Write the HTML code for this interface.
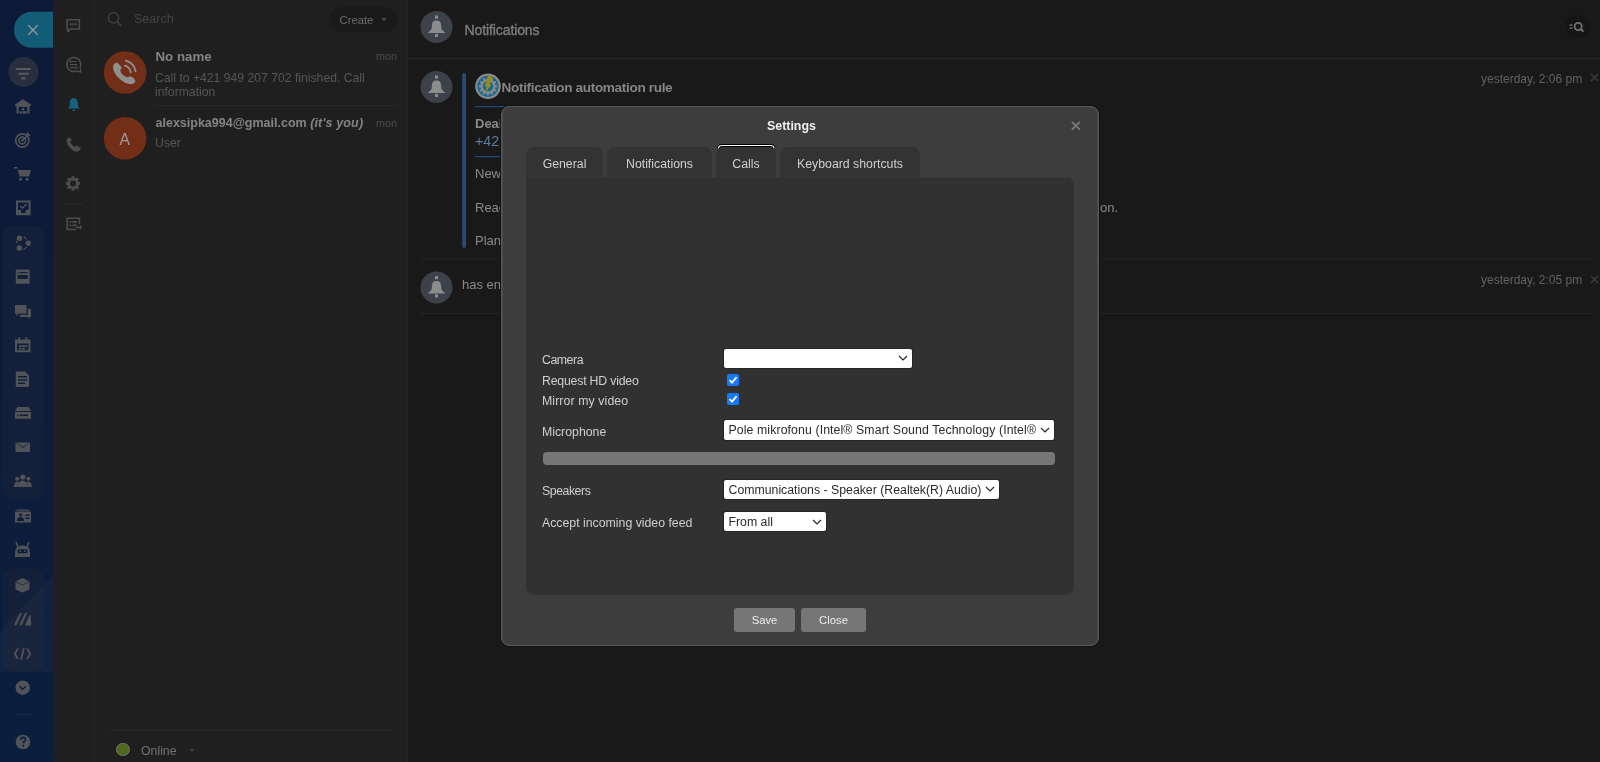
<!DOCTYPE html>
<html><head><meta charset="utf-8">
<style>
*{margin:0;padding:0;box-sizing:border-box}
html,body{width:1600px;height:762px;overflow:hidden;background:#1b1b1b;font-family:"Liberation Sans",sans-serif}
.abs{position:absolute}
.t{position:absolute;white-space:nowrap;line-height:1}
#c1{left:0;top:0;width:53px;height:762px;background:linear-gradient(180deg,#0d1a37 0%,#0e1c39 50%,#0b1e3e 100%);overflow:hidden}
#c2{left:53px;top:0;width:42px;height:762px;background:#1f1f1f}
#c3{left:95px;top:0;width:312px;height:762px;background:#1f1f1f}
#c3::before{content:"";position:absolute;left:-2px;top:0;width:2px;height:762px;background:#222}
#main{left:406px;top:0;width:1194px;height:762px;background:#191919}
#main::before{content:"";position:absolute;left:0;top:0;width:2px;height:762px;background:#222}
svg{position:absolute;overflow:visible}
/* text-rendering-fix */
#c3,#main,#modal{will-change:transform}
#modal{left:501px;top:106px;width:598px;height:540px;background:#3d3d3d;border:1px solid #575757;border-radius:8px;box-shadow:0 0 0 1px #121212,inset 1px 0 0 #4b4b4b,inset -1px 0 0 #4b4b4b}
.tab{position:absolute;top:40px;height:30px;background:#333;border-radius:8px 8px 0 0;color:#cfcfcf;font-size:12.3px;text-align:center;line-height:34px}
#panel{position:absolute;left:24px;top:70px;width:548px;height:418px;background:#313131;border-radius:0 7px 8px 8px;box-shadow:inset 0 1px 0 #383838}
.lbl{position:absolute;left:16px;color:#cfcfcf;font-size:12.3px;line-height:1}
.sel{position:absolute;background:#fff;border-radius:2px;color:#2a2a2a;font-size:12.3px;line-height:21px;padding-left:4.5px;white-space:nowrap;overflow:hidden}
.btn{position:absolute;top:500.7px;height:24.6px;background:#767676;border-radius:3px;color:#eee;font-size:11.3px;text-align:center;line-height:25px}
.cb{position:absolute;left:201px;width:12px;height:12px;background:#1479fb;border-radius:2px}
.sel{box-shadow:0 0 0 1px #262626}
</style></head><body>
<div id="c1" class="abs">
<svg style="left:0;top:0" width="53" height="762" viewBox="0 0 53 762">
  <!-- group backgrounds -->
  <rect x="3" y="226.3" width="41" height="271.5" rx="9" fill="#142039"/>
  <rect x="3" y="569" width="41" height="102" rx="9" fill="#142039"/>
  <path d="M53 575 L53 672 L0 672 L0 631 Z" fill="#ffffff" fill-opacity="0.025"/>
  <!-- close pill -->
  <path d="M32 11.7 H53 V47.8 H32 A18.05 18.05 0 0 1 32 11.7 Z" fill="#135c75"/>
  <path d="M28.3 25.3 L37.7 34.7 M37.7 25.3 L28.3 34.7" stroke="#8d9598" stroke-width="1.4"/>
  <!-- filter circle -->
  <circle cx="23.5" cy="72" r="15" fill="#282e3e"/>
  <g fill="#585b60">
    <path d="M15.4 68 H31.1 L30.3 70 H16.2 Z"/>
    <path d="M17.9 72.8 H29 L28.2 74.8 H18.7 Z"/>
    <path d="M21 77.2 H25.8 L25.2 79.5 H21.6 Z"/>
  </g>
  <g fill="#505357">
  <!-- warehouse -->
  <path d="M15 104.5 L23 99.3 L31 104.5 V106 H29.5 V113.6 H27.3 V107 H18.7 V113.6 H16.5 V106 H15 Z"/>
  <rect x="21.8" y="108" width="2.4" height="2.3"/>
  <rect x="19.5" y="111.2" width="2.4" height="2.4"/><rect x="22.6" y="111.2" width="2.4" height="2.4"/><rect x="25" y="111.2" width="1.5" height="2.4"/>
  </g>
  <!-- target -->
  <g fill="none" stroke="#505357" stroke-width="1.6">
    <circle cx="22.3" cy="140.5" r="6.6"/>
    <circle cx="22.3" cy="140.5" r="3.4"/>
  </g>
  <circle cx="22.3" cy="140.5" r="1.3" fill="#505357"/>
  <path d="M22.3 140.5 L28.5 134.3" stroke="#505357" stroke-width="1.5"/>
  <path d="M26.5 133 L28 131.8 L28.6 134 L30.8 134.4 L29.5 136 L27.2 135.8 Z" fill="#505357"/>
  <g fill="#505357">
  <!-- cart -->
  <path d="M14 167 H17 L18 170 H31 L29.2 176.5 H19.6 L17.2 168.6 H14 Z"/>
  <circle cx="20.5" cy="179.3" r="1.5"/><circle cx="27" cy="179.3" r="1.5"/>
  <!-- task -->
  <path d="M16 200.4 H30.6 V215.2 H16 Z M18 202.4 V210 H21 V213 H25.6 V210 H28.6 V202.4 Z" fill-rule="evenodd"/>
  <path d="M20 206 L22.3 208.3 L26.5 204" stroke="#505357" stroke-width="1.4" fill="none"/>
  <!-- sites -->
  <circle cx="19.5" cy="238.3" r="2.8"/><circle cx="28.3" cy="243.2" r="2.6"/><circle cx="19.3" cy="248" r="2.8"/>
  <path d="M16.5 243 A6.5 6.5 0 0 1 16.7 241" stroke="#505357" stroke-width="1.2" fill="none"/>
  <path d="M23.5 236.8 A6.5 6.5 0 0 1 26.5 239.5 M26.5 247 A6.5 6.5 0 0 1 23.5 249.5" stroke="#505357" stroke-width="1.2" fill="none"/>
  <!-- window -->
  <path d="M15.8 269.5 H29.6 V283.7 H15.8 Z M17.6 275 V279 H27.8 V275 Z" fill-rule="evenodd"/>
  <rect x="17.6" y="272" width="1.6" height="1.2" fill="#142039"/><rect x="20" y="272" width="7.6" height="1.2" fill="#142039"/>
  <!-- chat bubbles -->
  <path d="M15 305 H26.5 V313.5 H18.5 L16.3 316 V313.5 H15 Z"/>
  <path d="M27.8 308.8 H31 V317 H29.5 V319 L27.5 317 H20 V314.8 H27.8 Z"/>
  <!-- calendar -->
  <path d="M15 339.5 H30.5 V352.2 H15 Z M17 343.5 V350.2 H28.5 V343.5 Z" fill-rule="evenodd"/>
  <rect x="18.5" y="337" width="1.6" height="3.5"/><rect x="25.4" y="337" width="1.6" height="3.5"/>
  <rect x="19" y="345" width="2.5" height="2"/><rect x="22.2" y="345" width="2.5" height="2"/><rect x="25.3" y="345" width="2" height="2"/>
  <rect x="19" y="347.8" width="2.5" height="1.8"/><rect x="22.2" y="347.8" width="2.5" height="1.8"/>
  <!-- doc -->
  <path d="M15.8 371.5 H25 L29.1 375.6 V387 H15.8 Z M18 376 V377.4 H27 V376 Z M18 379.3 V380.7 H27 V379.3 Z M18 382.6 V384 H25 V382.6 Z" fill-rule="evenodd"/>
  <!-- drive -->
  <path d="M17.5 407 H28.5 L31 411 H15 Z"/>
  <path d="M15 412 H31 V418.7 H15 Z M17 414.6 V416 H18.3 V414.6 Z M19.6 414.6 V416 H28 V414.6 Z" fill-rule="evenodd"/>
  <!-- mail -->
  <path d="M15.5 442.4 L22.8 448 L30 442.4 V452 H15.5 Z"/>
  <path d="M16 442.4 H29.5 L22.8 447 Z"/>
  <!-- people -->
  <circle cx="22.8" cy="477" r="2.6"/><path d="M17.5 487 Q18 481 22.8 480.5 Q27.6 481 28.2 487 Z"/>
  <circle cx="17.2" cy="478.8" r="2"/><path d="M14 487 Q14 482 17.5 481.6 Q18.8 482 19 482.5 Q17.6 484 17.3 487 Z"/>
  <circle cx="28.4" cy="478.8" r="2"/><path d="M31.8 487 Q31.8 482 28.3 481.6 Q27 482 26.7 482.5 Q28.2 484 28.4 487 Z"/>
  <!-- contact -->
  <path d="M15 511.5 H31 V522.5 H15 Z M16.8 521 H24.3 Q24 517.3 20.6 517 Q17.2 517.3 16.8 521 Z M25.6 514.5 V516 H29.5 V514.5 Z M25.6 517.5 V519 H29.5 V517.5 Z" fill-rule="evenodd"/>
  <circle cx="20.6" cy="514.8" r="1.6" fill="#142039"/>
  <rect x="16.5" y="509.5" width="13" height="1.2"/>
  <!-- robot -->
  <path d="M15 557 V552.5 Q15 545.5 22.5 545.5 Q30 545.5 30 552.5 V557 Z M19 549.3 Q17.3 549.3 17.3 551.2 Q17.3 553.2 19 553.2 H26 Q27.7 553.2 27.7 551.2 Q27.7 549.3 26 549.3 Z" fill-rule="evenodd"/>
  <circle cx="20.2" cy="551.2" r="0.9"/><circle cx="24.8" cy="551.2" r="0.9"/>
  <path d="M17.8 546.8 L16.3 542.6 M27.2 546.8 L28.7 542.6" stroke="#505357" stroke-width="1.6" stroke-linecap="round"/>
  <!-- cube -->
  <path d="M22.5 578 L29.5 581.5 V589.5 L22.5 592.6 L15.5 589.5 V581.5 Z"/>
  <path d="M15.5 581.5 L22.5 585 L29.5 581.5" stroke="#172640" stroke-width="0.8" fill="none"/>
  <!-- stripes -->
  <path d="M14.3 624.2 L19.3 614 Q19.8 613 20.8 613 H22 L16.8 624.6 Q16.4 625.4 15.5 625.4 Q14 625.4 14.3 624.2 Z"/>
  <path d="M19.6 624.2 L24.6 614 Q25.1 613 26.1 613 H27.3 L22.1 624.6 Q21.7 625.4 20.8 625.4 Q19.3 625.4 19.6 624.2 Z"/>
  <path d="M25 625.4 L29.2 615.5 Q29.8 614.3 30.3 615.5 L31.3 624 Q31.4 625.4 30.2 625.4 Z"/>
  </g>
  <!-- code -->
  <g fill="none" stroke="#505357" stroke-width="1.8">
    <path d="M18 648.5 L14.8 653.7 L18 659"/>
    <path d="M27 648.5 L30.2 653.7 L27 659"/>
    <path d="M24 647.8 L21 659.7"/>
  </g>
  <!-- chevron circle -->
  <circle cx="22.7" cy="687.7" r="7.2" fill="#505357"/>
  <path d="M19.5 686.3 L22.7 689.3 L25.9 686.3" stroke="#102040" stroke-width="1.5" fill="none"/>
  <rect x="14.3" y="714" width="17.4" height="1" fill="#1a2845"/>
  <!-- help -->
  <circle cx="23" cy="742" r="7.3" fill="#505357"/>
  <path d="M20.6 740 Q20.8 737.4 23.1 737.4 Q25.5 737.5 25.5 739.6 Q25.4 741.2 23.3 742.2 V743.3" stroke="#102040" stroke-width="1.6" fill="none"/>
  <circle cx="23.2" cy="745.7" r="1" fill="#102040"/>
</svg>

</div>
<div id="c2" class="abs">
<svg style="left:0;top:0" width="42" height="762" viewBox="53 0 42 762">
  <g fill="none" stroke="#4d4d4d" stroke-width="1.6">
    <!-- chat -->
    <path d="M67 19.8 H79.4 V29 H70.2 L67.8 31.6 V29 H67 Z" stroke-linejoin="round"/>
    <!-- chat search -->
    <path d="M80.2 67.3 A7 7 0 1 0 76.3 71" />
    <path d="M76.3 71 L80.8 72 L80.2 67.3" stroke-width="1.3" stroke-linejoin="round"/>
    <path d="M70.5 61.5 H77 M69.8 64.6 H77.2 M70 67.7 H76.5" stroke-width="1.2"/>
    <!-- gear -->
    <circle cx="73" cy="183.4" r="4.3" stroke-width="2.6"/>
    <!-- list export -->
    <path d="M79.5 224 V218.2 H67.2 V229.5 H76" stroke-width="1.5"/>
  </g>
  <g fill="#4d4d4d">
    <rect x="69.6" y="23.3" width="2" height="2"/><rect x="72.2" y="23.3" width="2" height="2"/><rect x="74.8" y="23.3" width="2" height="2"/>
    <path d="M71 60 L69 61.5 L71 63 Z M76 66.2 L78 67.7 L76 69.2 Z"/>
    <!-- phone -->
    <path d="M67.5 138.3 Q66.2 139.5 66.8 142.5 Q68.5 147.5 73.5 150.7 Q76.5 152.2 78.3 151.2 L80.6 149.2 Q81 148.4 80.3 147.8 L77.5 145.8 Q76.7 145.3 76 146 L74.8 147.2 Q71.5 145 70 141.8 L71.2 140.5 Q71.8 139.8 71.3 139 L69.5 137.8 Q68.5 137.3 67.5 138.3 Z"/>
    <!-- gear teeth -->
    <g transform="translate(73 183.4)">
      <rect x="-1.5" y="-7.2" width="3" height="3"/><rect x="-1.5" y="4.2" width="3" height="3"/>
      <rect x="-7.2" y="-1.5" width="3" height="3"/><rect x="4.2" y="-1.5" width="3" height="3"/>
      <g transform="rotate(45)"><rect x="-1.5" y="-7.2" width="3" height="3"/><rect x="-1.5" y="4.2" width="3" height="3"/><rect x="-7.2" y="-1.5" width="3" height="3"/><rect x="4.2" y="-1.5" width="3" height="3"/></g>
    </g>
    <rect x="63.2" y="203.5" width="20.2" height="1" fill="#2a2a2a"/>
    <rect x="69.5" y="221" width="2" height="1.8"/><rect x="72.3" y="221" width="4.5" height="1.8"/>
    <rect x="69.5" y="224.5" width="2" height="1.8"/><rect x="72.3" y="224.5" width="4.5" height="1.8"/>
    <path d="M76 226.7 H80 V225 L82.3 227.5 L80 230 V228.3 H76 Z"/>
  </g>
  <!-- teal bell -->
  <path d="M73.7 98 C70.6 98.3 69.7 100.8 69.7 103.8 L69.5 106.3 L68 108.5 H79.5 L78 106.3 L77.8 103.8 C77.8 100.8 76.8 98.3 73.7 98 Z" fill="#16637d"/>
  <rect x="72.2" y="109.5" width="3" height="1.6" rx="0.8" fill="#16637d"/>
</svg>

</div>
<div id="c3" class="abs">
  <svg style="left:12px;top:12px" width="16" height="16"><circle cx="6.5" cy="5.9" r="5.1" fill="none" stroke="#3e3e3e" stroke-width="1.6"/><path d="M10 9.6L14.5 14.2" stroke="#3e3e3e" stroke-width="1.8"/></svg>
  <div class="t" style="left:39px;top:13.4px;font-size:12.5px;color:#444">Search</div>
  <div class="abs" style="left:234px;top:7px;width:68px;height:25px;border-radius:12.5px;background:#1a1a1a"></div>
  <div class="t" style="left:244.5px;top:14.5px;font-size:11.3px;color:#6c6c6c">Create</div>
  <svg style="left:286px;top:18px" width="6" height="3.5"><path d="M0 0H6L3 3.5Z" fill="#444"/></svg>

  <svg style="left:0;top:0" width="312" height="170" viewBox="95 0 312 170">
    <circle cx="125.1" cy="72.5" r="21.3" fill="#732e18"/>
    <path fill="#8f8f8f" d="M114.11 64.08 C114.76 63.26 116.13 62.60 117.06 62.76 C117.99 62.93 118.92 64.24 119.69 65.06 C120.45 65.88 121.54 66.81 121.65 67.69 C121.76 68.56 120.34 69.33 120.34 70.31 C120.34 71.29 120.89 72.61 121.65 73.59 C122.42 74.57 123.95 75.61 124.93 76.22 C125.92 76.82 126.68 77.20 127.56 77.20 C128.43 77.20 129.31 76.16 130.18 76.22 C131.06 76.27 131.99 76.87 132.81 77.53 C133.63 78.18 134.83 79.28 135.10 80.15 C135.38 81.03 135.16 82.12 134.45 82.78 C133.74 83.43 132.43 84.14 130.84 84.09 C129.25 84.03 126.90 83.43 124.93 82.45 C122.97 81.46 120.72 79.77 119.03 78.18 C117.33 76.60 115.75 74.68 114.76 72.93 C113.78 71.18 113.23 69.16 113.12 67.69 C113.01 66.21 113.45 64.90 114.11 64.08Z"/>
    <g fill="none" stroke="#8f8f8f" stroke-width="1.9" stroke-linecap="round">
      <path d="M124.8 65.6 A8.5 8.5 0 0 1 130.8 72.2"/>
      <path d="M125.8 60.6 A13.5 13.5 0 0 1 135.5 71.2"/>
    </g>
    <circle cx="125.1" cy="138.3" r="21.3" fill="#732e18"/>
  </svg>
  <div class="t" style="left:60.5px;top:49.8px;font-size:13.3px;font-weight:bold;color:#848484">No name</div>
  <div class="t" style="left:281px;top:51px;font-size:10.8px;color:#4b4b4b">mon</div>
  <div class="t" style="left:60px;top:72px;font-size:12.2px;color:#565656">Call to +421 949 207 702 finished. Call</div>
  <div class="t" style="left:60px;top:86px;font-size:12.2px;color:#565656">information</div>
  <div class="abs" style="left:60px;top:105px;width:242px;height:1px;background:#272727"></div>

  <div class="t" style="left:24.6px;top:131.6px;font-size:15.6px;color:#9a9a9a">A</div>
  <div class="t" style="left:60.5px;top:117px;font-size:12.5px;font-weight:bold;color:#848484">alexsipka994@gmail.com <i style="letter-spacing:0.15px">(it's you)</i></div>
  <div class="t" style="left:281px;top:117.5px;font-size:10.8px;color:#4b4b4b">mon</div>
  <div class="t" style="left:60px;top:137px;font-size:12.2px;color:#565656">User</div>

  <div class="abs" style="left:13px;top:730px;width:285px;height:1px;background:#272727"></div>
  <div class="abs" style="left:21px;top:742.5px;width:13.5px;height:13.5px;border-radius:50%;background:#4e691d;border:1px solid #727272"></div>
  <div class="t" style="left:46px;top:745px;font-size:12.3px;color:#727272">Online</div>
  <svg style="left:94px;top:749px" width="6" height="3"><path d="M0 0H6L3 3Z" fill="#3c3c3c"/></svg>
</div>
<div id="main" class="abs">
  <div class="abs" style="left:0;top:58px;width:1194px;height:1px;background:#262626"></div>
  <svg style="left:0;top:0" width="1194" height="320" viewBox="406 0 1194 320">
    <g id="bellav">
      <circle cx="436.5" cy="27" r="16" fill="#3d424a"/>
      <rect x="435" y="15.5" width="3" height="3.2" fill="#8c8c8c"/>
      <path fill="#8c8c8c" d="M436.5 20.6 C433.2 20.6 432.2 22.3 432 25 L431.5 29.3 L427.7 33.1 H445.3 L441.5 29.3 L441 25 C440.8 22.3 439.8 20.6 436.5 20.6 Z"/>
      <rect x="435" y="33.9" width="3" height="3" fill="#8c8c8c"/>
    </g>
    <use href="#bellav" y="60"/>
    <use href="#bellav" y="260.5"/>
    <rect x="462.2" y="73" width="3.8" height="175" rx="1.9" fill="#284a78"/>
    <circle cx="488" cy="86.3" r="12.8" fill="#8a8a8a"/>
    <circle cx="488" cy="86.3" r="10.6" fill="#156a8f"/>
    <path d="M495.31 85.14 L497.16 85.43 L497.16 87.17 L495.31 87.46 L494.91 88.95 L496.36 90.13 L495.50 91.63 L493.75 90.96 L492.66 92.05 L493.33 93.80 L491.83 94.66 L490.65 93.21 L489.16 93.61 L488.87 95.46 L487.13 95.46 L486.84 93.61 L485.35 93.21 L484.17 94.66 L482.67 93.80 L483.34 92.05 L482.25 90.96 L480.50 91.63 L479.64 90.13 L481.09 88.95 L480.69 87.46 L478.84 87.17 L478.84 85.43 L480.69 85.14 L481.09 83.65 L479.64 82.47 L480.50 80.97 L482.25 81.64 L483.34 80.55 L482.67 78.80 L484.17 77.94 L485.35 79.39 L486.84 78.99 L487.13 77.14 L488.87 77.14 L489.16 78.99 L490.65 79.39 L491.83 77.94 L493.33 78.80 L492.66 80.55 L493.75 81.64 L495.50 80.97 L496.36 82.47 L494.91 83.65Z" fill="#8c8c8c"/>
    <circle cx="488" cy="86.3" r="5.3" fill="#156a8f"/>
    <path d="M488.2 76 H493 L489.6 84.6 H491.8 L485 93 L486.8 86.8 H484.6 Z" fill="#9c8a17"/>
    <rect x="475" y="106" width="30" height="1.2" fill="#22497a"/>
    <rect x="475" y="156" width="30" height="1.2" fill="#244a78"/>
    <rect x="420" y="258.5" width="1172" height="1" fill="#242424"/>
    <rect x="420" y="313" width="1172" height="1" fill="#242424"/>
    <circle cx="1577" cy="27" r="12" fill="#151515"/>
    <g fill="#737373"><rect x="1569.5" y="24.5" width="3" height="1.3"/><rect x="1569.5" y="27.5" width="3" height="1.3"/></g>
    <circle cx="1578.2" cy="26.5" r="3.6" fill="none" stroke="#737373" stroke-width="1.7"/>
    <path d="M1580.8 29 L1583.5 31.6" stroke="#737373" stroke-width="1.9"/>
    <g stroke="#404040" stroke-width="1.1"><path d="M1591 74 L1598 81 M1598 74 L1591 81"/><path d="M1591 276 L1598 283 M1598 276 L1591 283"/></g>
  </svg>
  <div class="t" style="left:58.5px;top:23.2px;font-size:14px;color:#7e7e7e;-webkit-text-stroke:0.35px #7e7e7e;letter-spacing:-0.1px">Notifications</div>
  <div class="t" style="left:95.6px;top:80.6px;font-size:13.6px;letter-spacing:-0.35px;font-weight:bold;color:#858585">Notification automation rule</div>
  <div class="t" style="left:69px;top:117px;font-size:13px;font-weight:bold;color:#8a8a8a">Deal</div>
  <div class="t" style="left:69px;top:134.3px;font-size:14.2px;color:#5d7b9a">+42</div>
  <div class="t" style="left:69px;top:167px;font-size:13px;color:#8a8a8a">New</div>
  <div class="t" style="left:69px;top:201px;font-size:13px;color:#8a8a8a">Reac</div>
  <div class="t" style="left:694px;top:201px;font-size:13px;color:#8a8a8a">on.</div>
  <div class="t" style="left:69px;top:234px;font-size:13px;color:#8a8a8a">Plan</div>
  <div class="t" style="left:1075px;top:73px;font-size:12px;color:#626262">yesterday, 2:06 pm</div>
  <div class="t" style="left:56px;top:278px;font-size:13px;color:#8a8a8a">has en</div>
  <div class="t" style="left:1075px;top:274px;font-size:12px;color:#626262">yesterday, 2:05 pm</div>
</div>

<div id="modal" class="abs">
  <div class="t" style="left:265px;top:13px;color:#f0f0f0;font-weight:bold;font-size:12.4px">Settings</div>
  <svg style="left:570px;top:15px" width="8" height="8"><path d="M0.3 0.3L7.4 7.2M7.4 0.3L0.3 7.2" stroke="#7a7a7a" stroke-width="1.7" stroke-linecap="round"/></svg>
  <div class="tab" style="left:24px;width:77px">General</div>
  <div class="tab" style="left:105px;width:105px">Notifications</div>
  <div class="tab" style="left:214px;width:60px">Calls</div>
  <div class="tab" style="left:278px;width:140px">Keyboard shortcuts</div>
  <svg style="left:0;top:0" width="596" height="80" viewBox="502 107 596 80">
    <path d="M718.3 148.2 Q719 145.5 722 145.5 H770.5 Q773.5 145.5 774.2 148.2" fill="none" stroke="#000" stroke-width="3"/>
    <path d="M718.3 148.2 Q719 145.5 722 145.5 H770.5 Q773.5 145.5 774.2 148.2" fill="none" stroke="#fff" stroke-width="1.1"/>
  </svg>
  <div id="panel">
    <div class="lbl" style="top:177px;letter-spacing:-0.45px">Camera</div>
    <div class="sel" style="left:198px;top:171.5px;width:188px;height:19.5px"><svg style="right:5px;top:7.5px" width="8" height="4"><path d="M0 0L4 4L8 0" fill="none" stroke="#222" stroke-width="1.1"/></svg></div>
    <div class="lbl" style="top:198px;letter-spacing:-0.2px">Request HD video</div>
    <div class="cb" style="top:196.5px"><svg style="left:0;top:0" width="12" height="12"><path d="M2.6 6.2L5 8.6L9.6 3.2" fill="none" stroke="#fff" stroke-width="1.8"/></svg></div>
    <div class="lbl" style="top:218px;letter-spacing:0.1px">Mirror my video</div>
    <div class="cb" style="top:216px"><svg style="left:0;top:0" width="12" height="12"><path d="M2.6 6.2L5 8.6L9.6 3.2" fill="none" stroke="#fff" stroke-width="1.8"/></svg></div>
    <div class="lbl" style="top:249px">Microphone</div>
    <div class="sel" style="left:198px;top:243px;width:330px;height:19.5px"><span style="position:absolute;left:4.5px;top:0;width:308px;overflow:hidden;letter-spacing:0.1px">Pole mikrofonu (Intel® Smart Sound Technology (Intel®</span><svg style="right:5px;top:7.5px" width="8" height="4"><path d="M0 0L4 4L8 0" fill="none" stroke="#222" stroke-width="1.1"/></svg></div>
    <div class="abs" style="left:16.5px;top:275px;width:512px;height:13px;background:#777;border-radius:4px"></div>
    <div class="lbl" style="top:308px;letter-spacing:-0.45px">Speakers</div>
    <div class="sel" style="left:198px;top:302.5px;width:275px;height:19.5px">Communications - Speaker (Realtek(R) Audio)<svg style="right:5px;top:7.5px" width="8" height="4"><path d="M0 0L4 4L8 0" fill="none" stroke="#222" stroke-width="1.1"/></svg></div>
    <div class="lbl" style="top:340px">Accept incoming video feed</div>
    <div class="sel" style="left:198px;top:335px;width:102px;height:19px">From all<svg style="right:5px;top:7.5px" width="8" height="4"><path d="M0 0L4 4L8 0" fill="none" stroke="#222" stroke-width="1.1"/></svg></div>
  </div>
  <div class="btn" style="left:232px;width:61px">Save</div>
  <div class="btn" style="left:299px;width:65px">Close</div>
</div>
</body></html>
